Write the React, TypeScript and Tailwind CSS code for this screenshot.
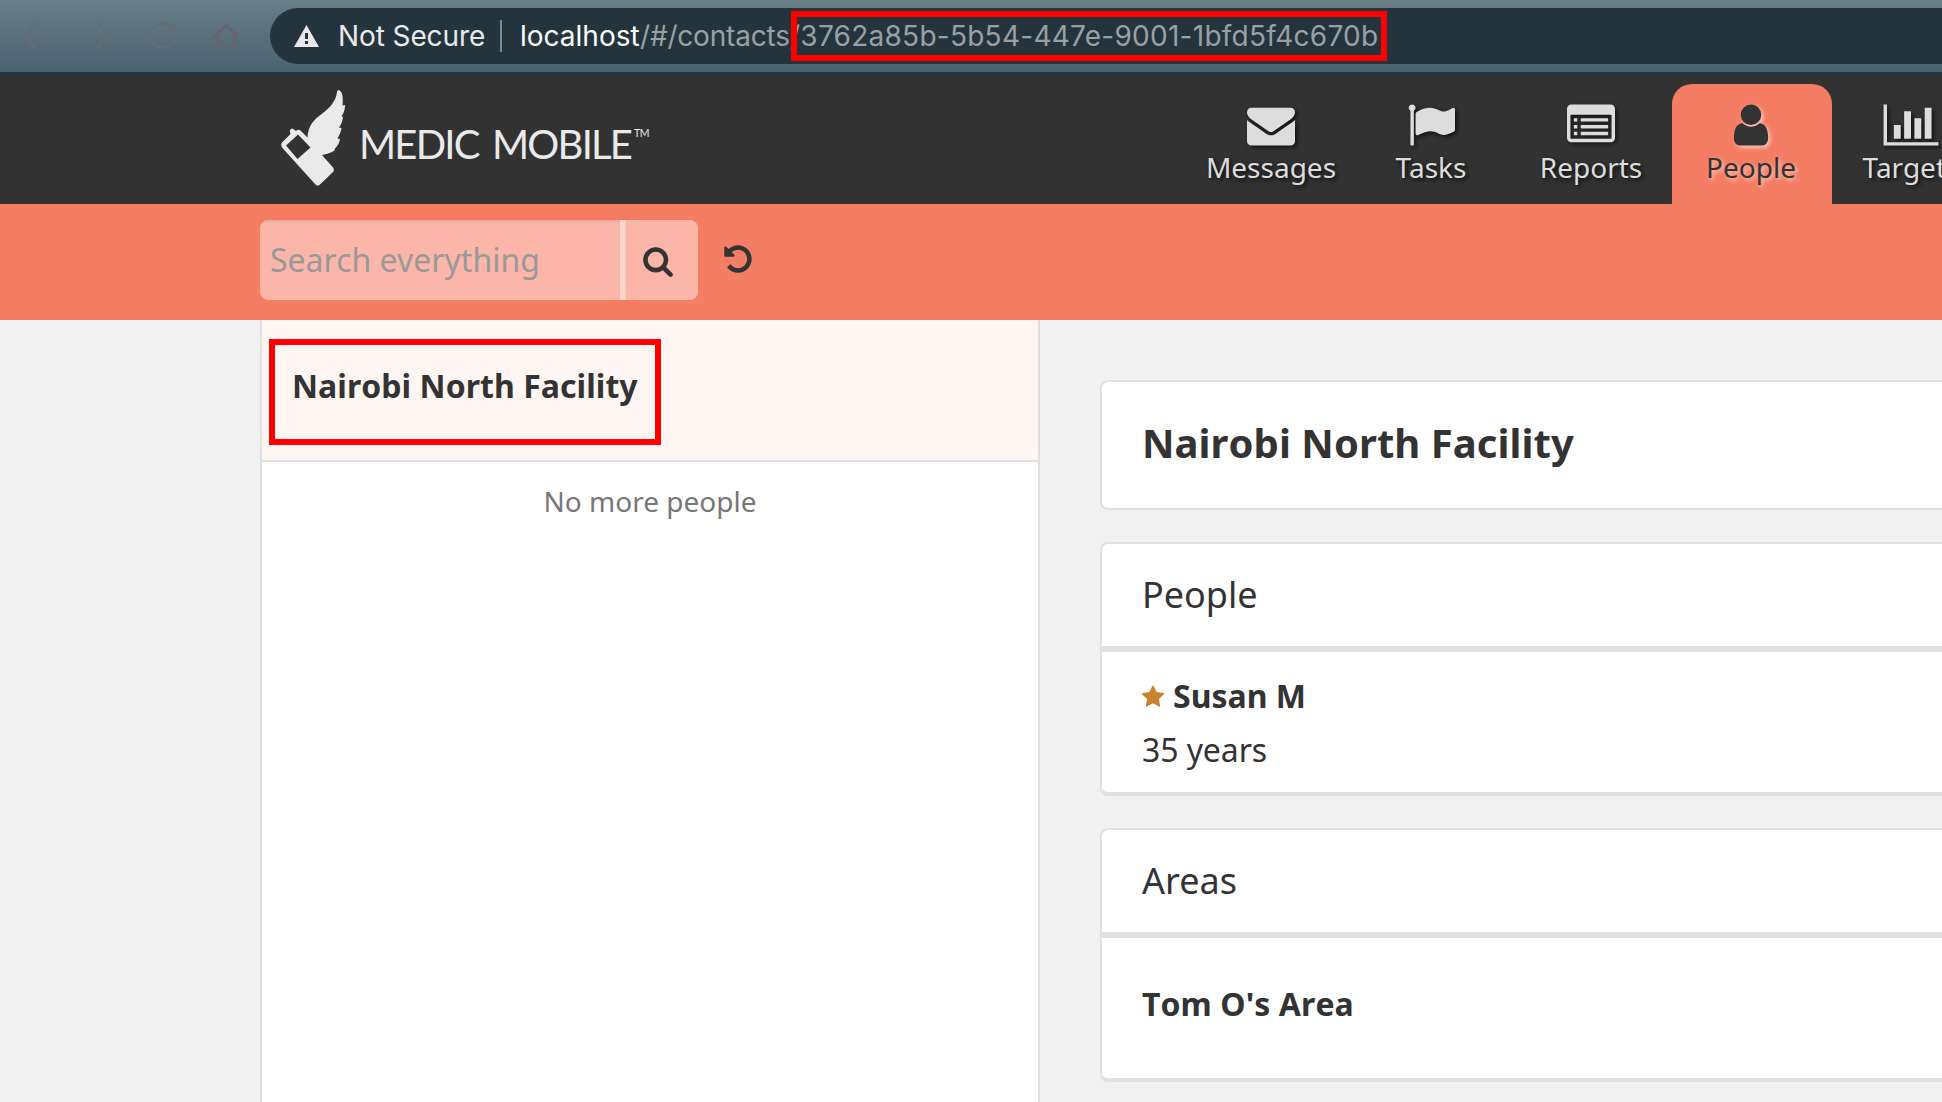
import type { ReactNode } from "react";

function Glyph({ d, size, className = "" }: { d: string; size: number; className?: string }) {
  return (
    <svg viewBox="0 0 1792 1792" width={size} height={size} fill="currentColor" className={"shrink-0 overflow-visible " + className}>
      <path d={d} fillRule="evenodd" />
    </svg>
  );
}

const ENVELOPE =
  "M1792 710v794q0 66-47 113t-113 47h-1472q-66 0-113-47t-47-113v-794q44 49 101 87 362 246 497 345 57 42 92.5 65.5t94.5 48 110 24.5h2q51 0 110-24.5t94.5-48 92.5-65.5q170-123 498-345 57-39 100-87zm0-294q0 79-49 151t-122 123q-376 261-468 325-10 7-42.5 31t-54 38.5-52 32.5-57.5 27-50 9h-2q-23 0-50-9t-57.5-27-52-32.5-54-38.5-42.5-31q-91-64-262-182.5t-205-142.5q-62-42-117-115.5t-55-136.5q0-78 41.5-130t118.5-52h1472q65 0 112.5 47t47.5 113z";
const FLAG =
  "M320 256q0 72-64 110v1266q0 13-9.5 22.5t-22.5 9.5h-64q-13 0-22.5-9.5t-9.5-22.5v-1266q-64-38-64-110 0-53 37.5-90.5t90.5-37.5 90.5 37.5 37.5 90.5zm1472 64v763q0 25-12.5 38.5t-39.5 27.5q-215 116-369 116-61 0-123.5-22t-108.5-48-115.5-48-142.5-22q-192 0-464 146-17 9-33 9-26 0-45-19t-19-45v-742q0-32 31-55 21-14 79-43 236-120 421-120 107 0 200 29t219 88q38 19 88 19 54 0 117.5-21t110-47 88-47 54.5-21q26 0 45 19t19 45z";
const LIST =
  "M160 128h1472q66 0 113 47t47 113v1088q0 66-47 113t-113 47h-1472q-66 0-113-47t-47-113v-1088q0-66 47-113t113-47zM160 512q-32 0-32 32v832q0 32 32 32h1472q32 0 32-32v-832q0-32-32-32zM256 640h128v128h-128zM256 896h128v128h-128zM256 1152h128v128h-128zM544 640h960q32 0 32 32v64q0 32-32 32h-960q-32 0-32-32v-64q0-32 32-32zM544 896h960q32 0 32 32v64q0 32-32 32h-960q-32 0-32-32v-64q0-32 32-32zM544 1152h960q32 0 32 32v64q0 32-32 32h-960q-32 0-32-32v-64q0-32 32-32z";
const USER =
  "M1536 1399q0 109-62.5 187t-150.5 78h-854q-88 0-150.5-78t-62.5-187q0-85 8.5-160.5t31.5-152 58.5-131 94-89 134.5-34.5q131 128 313 128t313-128q76 0 134.5 34.5t94 89 58.5 131 31.5 152 8.5 160.5zm-256-887q0 159-112.5 271.5t-271.5 112.5-271.5-112.5-112.5-271.5 112.5-271.5 271.5-112.5 271.5 112.5 112.5 271.5z";
const CHART =
  "M-128 128h128v1408h1920v128h-2048zM256 896h256v512h-256zM640 384h256v1024h-256zM1024 640h256v768h-256zM1408 256h256v1152h-256z";
const SEARCH =
  "M1216 832q0-185-131.5-316.5t-316.5-131.5-316.5 131.5-131.5 316.5 131.5 316.5 316.5 131.5 316.5-131.5 131.5-316.5zm512 832q0 52-38 90t-90 38q-54 0-90-38l-343-342q-179 124-399 124-143 0-273.5-55.5t-225-150-150-225-55.5-273.5 55.5-273.5 150-225 225-150 273.5-55.5 273.5 55.5 225 150 150 225 55.5 273.5q0 220-124 399l343 343q37 37 37 90z";
const UNDO =
  "M1664 896q0 156-61 298t-164 245-245 164-298 61q-172 0-327-72.5t-264-204.5q-7-10-6.5-22.5t8.5-20.5l137-138q10-9 25-9 16 2 23 12 73 95 179 147t225 52q104 0 198.5-40.5t163.5-109.5 109.5-163.5 40.5-198.5-40.5-198.5-109.5-163.5-163.5-109.5-198.5-40.5q-98 0-188 35.5t-160 101.5l137 138q31 30 14 69-17 40-59 40h-448q-26 0-45-19t-19-45v-448q0-42 40-59 39-17 69 14l130 129q107-101 244.5-156.5t284.5-55.5q156 0 298 61t245 164 164 245 61 298z";
const STAR =
  "M1728 647q0 22-26 48l-363 354 86 500q1 7 1 20 0 21-10.5 35.5t-30.5 14.5q-19 0-40-12l-449-236-449 236q-22 12-40 12-21 0-31.5-14.5t-10.5-35.5q0-6 2-20l86-500-364-354q-25-27-25-48 0-37 56-46l502-73 225-455q19-41 49-41t49 41l225 455 502 73q56 9 56 46z";

function BrowserBar() {
  return (
    <div className="flex h-[74px] shrink-0 border-b-2 border-[#1e3740] bg-linear-to-b from-[#687f87] to-[#4a626e] pt-2">
      <svg width="270" height="56" viewBox="0 8 270 56" fill="none" className="shrink-0">
        <g stroke="#626e74" strokeWidth="2.6">
          <path d="M47 35.3H23M34.5 23L22.5 35.3L34.5 47.5" />
          <path d="M85 35.3H109M97.500 23L109.500 35.3L97.500 47.5" />
          <path d="M172 28A12 12 0 1 0 174 40" />
        </g>
        <path d="M176 23V34H165Z" fill="#626e74" />
        <path d="M214 37L226 25L238 37M217.500 35V47.500H234.500V35" stroke="#66656d" strokeWidth="3" />
      </svg>
      <div className="flex h-14 flex-1 items-center rounded-l-full bg-[#24343c] text-[28px]/[56px] whitespace-nowrap">
        <svg width="26" height="22" viewBox="0 0 26 22" className="ml-6 shrink-0">
          <path d="M12.500 0L25 22H0Z" fill="#e9e9ea" />
          <path d="M11 8h3v6h-3zM11 16h3v3h-3z" fill="#24343c" />
        </svg>
        <span className="ml-[18px] w-[162px] tracking-[-0.1px] text-[#e9eaeb]">Not Secure</span>
        <span className="h-8 w-0.5 bg-[#7f898e]" />
        <span className="ml-[18px] w-[120px] text-white">localhost</span>
        <span className="w-[151px] tracking-[-0.2px] text-[#9aa1a4]">/#/contacts</span>
        <div className="relative w-[596px]">
          <span className="-ml-px tracking-[0.26px] text-[#9aa1a4]">/3762a85b-5b54-447e-9001-1bfd5f4c670b</span>
          <div className="absolute top-[3px] left-0 h-[50px] w-[596px] border-6 border-[#ff0000]" />
        </div>
      </div>
    </div>
  );
}

function Logo() {
  return (
    <div className="flex items-start">
      <svg width="66" height="100" viewBox="280 88 66 100" className="shrink-0">
        <path
          fill="#eaeaea"
          d="M338.500 90C342 91 343.500 96 342.500 105.500L345 105C345 109 344.500 112 341.500 116L343 117C342.500 121 341.500 124 339 127.500L341.500 128C341 132 339.500 135 337.500 138.500L340 139C339.500 142.500 338 145.500 335 148.500L334.500 150.500C331.500 152.500 327 154 322 155L333 167.500Q335 170 332.500 172.500L320 184.500Q317.500 187 315 184L282 147.500Q280 144 283 141.500L290.500 134Q288.500 129 292.500 128.500L296 131Q299 128.500 301.500 131.500L307.500 137.500C308 126 314 119.500 321 114.500C330 108 336 101 337 92Q337.500 90 338.500 90ZM298 134.500L286 145.500L297.500 159L310.500 147.500Z"
          fillRule="evenodd"
        />
      </svg>
      <div className="mt-8 ml-[13px] flex items-start font-['Lato'] text-[#eaeaea]">
        <span className="w-[275px] text-[40px]/[48px] tracking-[-1.8px] [word-spacing:5px] whitespace-nowrap">MEDIC MOBILE</span>
        <span className="mt-[5px] text-[10.5px]/[16px] tracking-[-0.4px]">TM</span>
      </div>
    </div>
  );
}

function Tab({ icon, label, active = false }: { icon: string; label: string; active?: boolean }) {
  return (
    <div
      className={
        "flex h-[120px] w-40 shrink-0 flex-col items-center rounded-t-[20px] pt-[17px] pr-0.5 " +
        (active
          ? "bg-[#f47d63] text-[#333333] [text-shadow:2px_2px_4px_#ffffff99]"
          : "text-[#dddddd] [text-shadow:2px_2px_4px_#000000cc]")
      }
    >
      <Glyph
        d={icon}
        size={48}
        className={active ? "drop-shadow-[2px_2px_2px_#ffffff99]" : "drop-shadow-[2px_2px_2px_#000000aa]"}
      />
      <span className="-mt-px text-[28px]/[38px]">{label}</span>
    </div>
  );
}

function AppHeader() {
  return (
    <header className="flex h-[130px] shrink-0 justify-between bg-[#323232]">
      <div className="pt-3.5 pl-[280px]">
        <Logo />
      </div>
      <nav className="flex w-[750px] overflow-hidden pt-2.5">
        <Tab icon={ENVELOPE} label="Messages" />
        <Tab icon={FLAG} label="Tasks" />
        <Tab icon={LIST} label="Reports" />
        <Tab icon={USER} label="People" active />
        <Tab icon={CHART} label="Targets" />
      </nav>
    </header>
  );
}

function SearchBar() {
  return (
    <div className="flex h-[116px] shrink-0 bg-[#f47d63] pt-4 pl-[260px] text-[#333333]">
      <div className="flex h-20 w-[438px] overflow-hidden rounded-lg">
        <div className="flex w-[348px] grow items-center bg-[#fbb6a9] pl-2.5 text-[32px] text-[#999999] shadow-[inset_0_2px_2px_#00000013]">
          Search everything
        </div>
        <div className="w-1.5 bg-[#fdd5cd]" />
        <div className="flex w-[72px] bg-[#fbb6a9] pt-[25px] pl-4">
          <Glyph d={SEARCH} size={32} />
        </div>
      </div>
      <Glyph d={UNDO} size={32} className="mt-[22.5px] ml-6" />
    </div>
  );
}

function Card({ title, children }: { title: string; children: ReactNode }) {
  return (
    <section className="mb-8 rounded-l-lg border-2 border-r-0 border-b-4 border-[#e0e0e0] bg-white">
      <h2 className="h-[108px] border-b-6 border-[#e0e0e0] pl-10 text-[36px]/[101px]">{title}</h2>
      <div className="h-[140px] pl-10 text-[32px]">{children}</div>
    </section>
  );
}

export default function App() {
  return (
    <div className="flex h-[1102px] w-[1942px] flex-col overflow-hidden bg-[#f1f1f1] font-['Noto_Sans',sans-serif] text-[#333333]">
      <div className="shrink-0 font-['Inter',sans-serif]">
        <BrowserBar />
      </div>
      <AppHeader />
      <SearchBar />
      <main className="flex min-h-0 flex-1 pl-[260px]">
        <aside className="w-[780px] border-x-2 border-[#e0e0e0] bg-white">
          <div className="h-[142px] border-b-2 border-[#e0e0e0] bg-[#fff5f2] pt-[19px] pl-[7px]">
            <div className="h-[106px] w-[392px] border-6 border-[#ff0000] pt-[19px] pl-[17px] text-[32px]/[44px] font-bold tracking-[0.05px] whitespace-nowrap [font-kerning:none]">
              Nairobi North Facility
            </div>
          </div>
          <p className="pt-[20px] text-center text-[28px]/[38px] text-[#777777]">No more people</p>
        </aside>
        <div className="flex-1 pt-[60px] pl-[60px]">
          <section className="mb-8 h-[130px] rounded-l-lg border-2 border-r-0 border-[#e0e0e0] bg-white pl-10 text-[40px]/[121px] font-bold tracking-[0.05px] [font-kerning:none]">
            Nairobi North Facility
          </section>
          <Card title="People">
            <div className="flex items-center pt-[22px] leading-[44px] font-bold">
              <Glyph d={STAR} size={24} className="mt-0.5 -ml-px text-[#c78330]" />
              <span className="ml-2">Susan M</span>
            </div>
            <div className="mt-2.5 leading-[44px] tracking-[-0.1px]">35 years</div>
          </Card>
          <Card title="Areas">
            <div className="pt-[44px] leading-[44px] font-bold tracking-[0.08px] [font-kerning:none]">Tom O's Area</div>
          </Card>
        </div>
      </main>
    </div>
  );
}
